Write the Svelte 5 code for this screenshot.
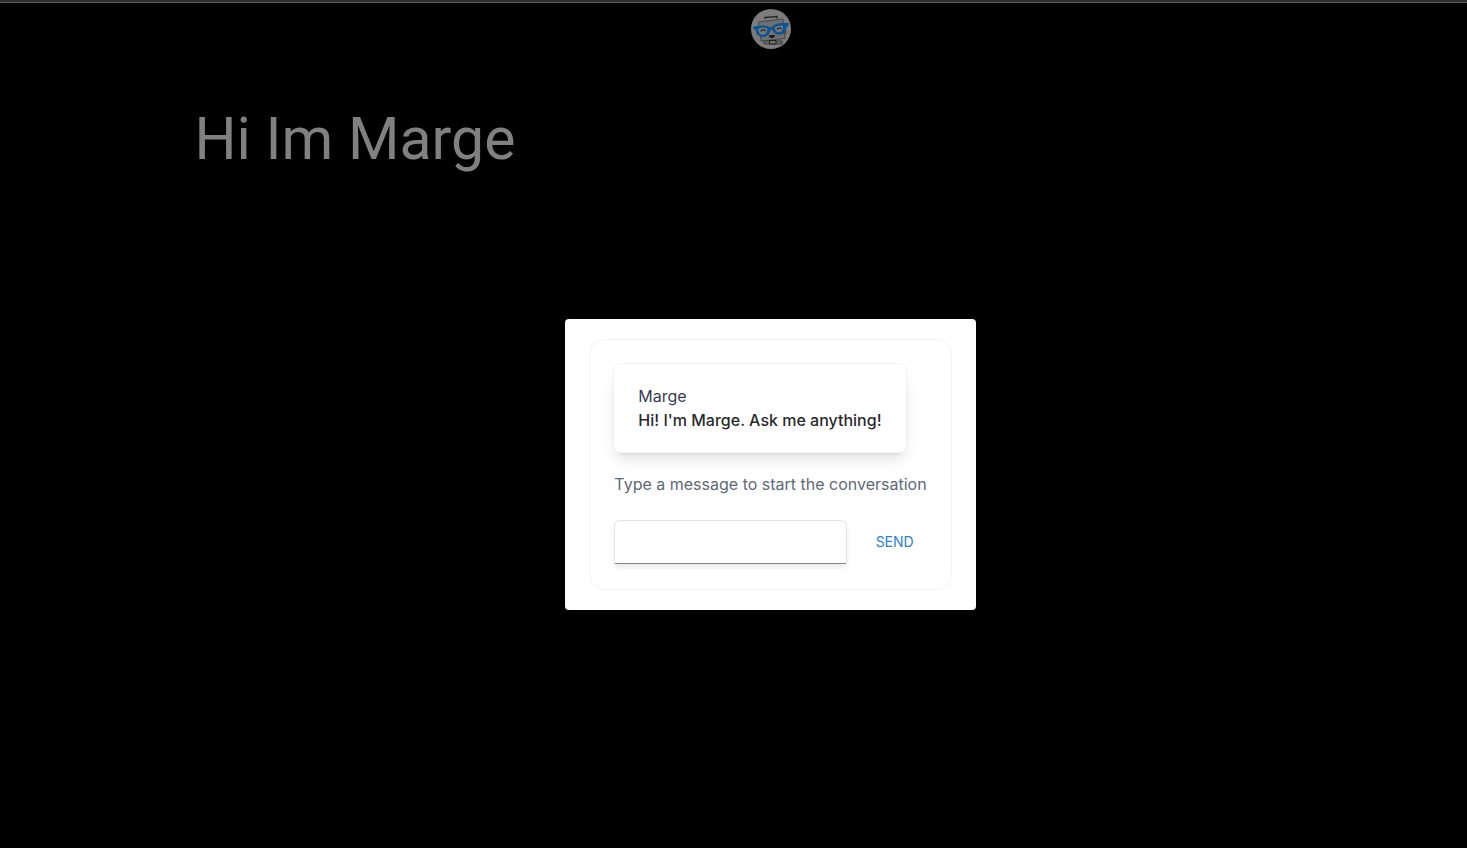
<script lang="ts">
  let draft = $state('');
  let messages = $state([{ author: 'Marge', text: "Hi! I'm Marge. Ask me anything!" }]);

  function send(event: SubmitEvent) {
    event.preventDefault();
    const text = draft.trim();
    if (!text) return;
    messages.push({ author: 'You', text });
    draft = '';
  }
</script>

<div class="page">
  <header>
    <svg class="avatar" viewBox="0 0 40 40" role="img" aria-label="Marge">
      <circle cx="20" cy="20" r="20" fill="#7c7c7c" />
      <path d="M7 22 5 24 7 28ZM34 20l2 3-2 4Z" fill="#6d5339" />
      <path d="M13 32H31V35H13Z" fill="#6c6c6c" stroke="#303030" stroke-width=".8" />
      <path d="M7.500 13 32 10 34 29.500 10 32Z" fill="#707070" stroke="#3c3c3c" stroke-width=".8" />
      <path d="M14 10V8.500L26 7.500V9.500" fill="none" stroke="#292929" stroke-width="1.400" />
      <path d="M18.500 31.500H25V35H18.500Z" fill="#747474" stroke="#1d1d1d" />
      <path
        d="M2 18C7 16 14 16 17 17.500L20 18.500 23 16C27 13.500 33 14 38 14L37 17.500 35.500 18C35 23 33 25.500 29 25.500 24.500 26 22.500 23.500 21.500 20.500L19.500 21C19 25 16 28 12 28 7.500 28 5.500 25 4.500 21L2.500 20Z"
        fill="#0a559a"
      />
      <path
        d="M7 20C10 18.500 14 18.500 16.500 19.500 16.500 23 15 25.500 12 25.800 9 26 7.500 24 7 20ZM23.500 18.500C26 16.500 29 16.500 32 16.800 32 20.500 31 23 28.500 23.300 26 23.500 24.500 22 23.500 18.500Z"
        fill="#777"
      />
      <path d="M9.500 22.500q2.500-3 5-.5M26 20.500q2.500-3 4.500-.5" fill="none" stroke="#252525" stroke-width="1.100" />
      <path d="M17.500 26.500 24 26Q23.500 29 21 29T17.500 26.500Z" fill="#141414" />
    </svg>
  </header>
  <main>
    <h1>Hi Im Marge</h1>
  </main>

  <div class="overlay">
    <div class="dialog" role="dialog" aria-modal="true" aria-label="Marge">
      <section class="chat">
        {#each messages as message}
          <article class="bubble">
            <p class="author">{message.author}</p>
            <p class="text">{message.text}</p>
          </article>
        {/each}
        <form onsubmit={send}>
          <label for="message">Type a message to start the conversation</label>
          <div class="row">
            <input id="message" type="text" autocomplete="off" bind:value={draft} />
            <button type="submit">SEND</button>
          </div>
        </form>
      </section>
    </div>
  </div>
</div>

<style>
  :global(body) {
    margin: 0;
    background: #000;
  }
  .page {
    box-sizing: border-box;
    min-height: 100vh;
    padding-left: 74px;
    border-top: 2px solid #2d2d2d;
    box-shadow: inset 0 1px #5c5c5c;
    background: #000;
    color: #808080;
    font-family: Inter, sans-serif;
  }
  header {
    display: flex;
    justify-content: center;
    padding-top: 7px;
  }
  .avatar {
    width: 40px;
    height: 40px;
  }
  main {
    max-width: 1152px;
    margin: 0 auto;
    padding: 54px 24px 0;
  }
  h1 {
    margin: 0;
    font: 400 59px/72px Roboto, sans-serif;
  }
  .overlay {
    position: fixed;
    inset: 81px 0 0 74px;
    display: flex;
    align-items: center;
    justify-content: center;
  }
  .dialog {
    padding: 20px 24px;
    border-radius: 4px;
    background: #fff;
  }
  .chat {
    padding: 23px 24px 25px;
    border: 1px solid #f3f3f3;
    border-radius: 16px;
  }
  .bubble {
    width: fit-content;
    padding: 20px 24px;
    margin: 0 0 19px -1px;
    border: 1px solid #f2f2f2;
    border-radius: 8px;
    box-shadow: 0 10px 15px -3px rgb(0 0 0 / 10%), 0 4px 6px -4px rgb(0 0 0 / 10%);
  }
  p {
    margin: 0;
    font-size: 16px;
    line-height: 24px;
  }
  .author {
    color: #364052;
    font-weight: 380;
  }
  .text {
    color: #2a2a2a;
    font-weight: 540;
  }
  label {
    display: block;
    color: #5f6877;
    font-size: 16px;
    line-height: 24px;
    font-weight: 400;
  }
  .row {
    display: flex;
    align-items: center;
    margin-top: 24px;
  }
  input {
    box-sizing: border-box;
    flex: 1;
    width: 0;
    height: 44px;
    padding: 8px 12px;
    border: 1px solid #e5e5e5;
    border-bottom-color: #858585;
    border-radius: 6px 6px 2px 2px;
    outline: none;
    box-shadow: 0 4px 6px -1px rgb(0 0 0 / 10%);
    font: 400 16px/24px Inter, sans-serif;
  }
  button {
    width: 64px;
    margin-left: 16px;
    padding: 8px 0;
    border: 0;
    background: none;
    color: #2b80d8;
    font: 400 14px/22px Inter, sans-serif;
    cursor: pointer;
  }
</style>
